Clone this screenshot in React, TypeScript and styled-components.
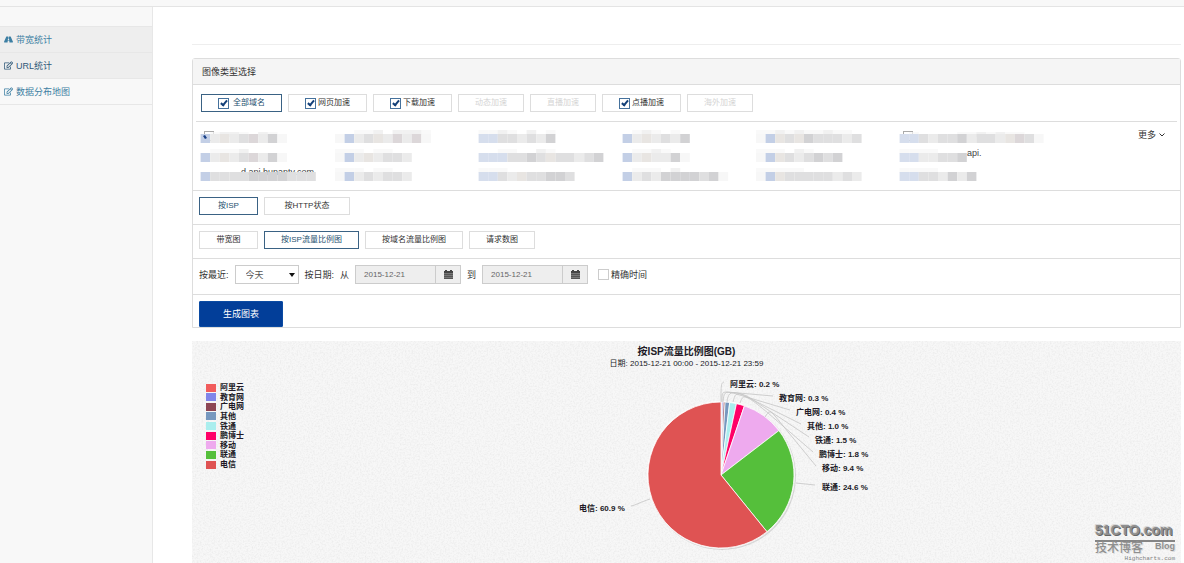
import React from "react";
import styled, { createGlobalStyle, css } from "styled-components";
import { FaRoad, FaRegEdit } from "react-icons/fa";

const GlobalStyle = createGlobalStyle`
  *, *::before, *::after { box-sizing: border-box; }
  body {
    margin: 0;
    background: #fff;
    color: #333;
    font-family: "Liberation Sans", "Noto Sans CJK SC", sans-serif;
    font-size: 9px;
    line-height: 12px;
  }
  button, input, select { font: inherit; color: inherit; margin: 0; }
`;

const Shell = styled.div`
  display: flex;
  flex-direction: column;
  min-height: 100vh;
`;

const TopBar = styled.header`
  height: 7px;
  background: #f8f8f8;
  border-bottom: 1px solid #e4e4e4;
`;

const Columns = styled.div`
  display: flex;
  flex: 1;
`;

const Sidebar = styled.nav`
  flex: 0 0 153px;
  padding-top: 19px;
  background: #f8f8f8;
  border-right: 1px solid #e7e7e7;
`;

const NavList = styled.ul`
  margin: 0;
  padding: 0;
  list-style: none;
  border-top: 1px solid #e7e7e7;
`;

const NavLink = styled.a<{ $active?: boolean; $dark?: boolean }>`
  display: flex;
  align-items: center;
  gap: 3px;
  height: 26px;
  padding-left: 4px;
  border-bottom: 1px solid #e7e7e7;
  background: ${(p) => (p.$active ? "#eeeeee" : "transparent")};
  color: ${(p) => (p.$dark ? "#2f5878" : "#3d7fa3")};
  text-decoration: none;
`;

const Main = styled.main`
  display: flex;
  flex-direction: column;
  flex: 1;
  min-width: 0;
  padding: 37px 3px 0 39px;
`;

const PageRule = styled.hr`
  width: 100%;
  margin: 0 0 13px;
  border: 0;
  border-top: 1px solid #eee;
`;

const Panel = styled.section`
  border: 1px solid #ddd;
  border-radius: 3px 3px 0 0;
`;

const PanelTitle = styled.h1`
  margin: 0;
  padding: 7px 9px 6px;
  border-bottom: 1px solid #ddd;
  background: #f5f5f5;
  font-size: 9px;
  font-weight: 400;
  line-height: 12px;
`;

const Section = styled.div`
  display: flex;
  align-items: center;
  gap: 6px;
  padding: 6px;
  border-top: 1px solid #ddd;
`;

const TabSection = styled(Section)`
  padding-bottom: 9px;
`;

const DateSection = styled(Section)`
  padding-bottom: 10px;
`;

const SubmitSection = styled(Section)`
  padding-bottom: 0;
`;

const DomainSection = styled.div`
  padding: 9px 3px 4px;
`;

const TypeRow = styled.div`
  display: flex;
  flex-wrap: wrap;
  gap: 6px;
  padding: 0 5px 9px;
  border-bottom: 1px solid #ddd;
`;

const chip = css<{ $selected?: boolean }>`
  display: inline-flex;
  align-items: center;
  justify-content: center;
  height: 18px;
  padding: 0 16px;
  border: 1px solid ${(p) => (p.$selected ? "#3a6284" : "#ddd")};
  background: #fff;
  color: ${(p) => (p.$selected ? "#25506f" : "#333")};
  line-height: 12px;
  white-space: nowrap;
`;

const Chip = styled.button<{ $selected?: boolean; $wide?: boolean }>`
  ${chip}
  min-width: ${(p) => (p.$wide ? 86 : 59)}px;
  && { font-size: 8px; }

  &:disabled { color: #d4d4d4; }
`;

const CheckChip = styled.label<{ $selected?: boolean }>`
  ${chip}
  gap: ${(p) => (p.$selected ? 4 : 2)}px;
  font-size: 8px;
`;

const CheckBox = styled.input`
  appearance: none;
  flex: none;
  position: relative;
  width: 11px;
  height: 11px;
  border: 1px solid #ccc;
  background: #fff;

  &:checked { border-color: #45719c; }

  &:checked::after {
    content: "";
    position: absolute;
    left: 3px;
    top: 0;
    width: 4px;
    height: 7px;
    border: solid #123f78;
    border-width: 0 2px 2px 0;
    transform: rotate(40deg);
  }
`;

const DomainArea = styled.div`
  display: flex;
  align-items: flex-start;
  padding: 7px 12px 0 5px;
`;

const DomainGrid = styled.div`
  flex: 1;
  min-width: 0;
  display: grid;
  grid-template-columns:
    minmax(0, 144fr) minmax(0, 134fr) minmax(0, 144fr)
    minmax(0, 144fr) minmax(0, 134fr) minmax(0, 238fr);
`;

const Mosaic = styled.svg`
  display: block;
  width: 170px;
  height: 19px;
  margin-left: -10px;
  overflow: visible;
`;

const MoreButton = styled.button`
  display: flex;
  flex: none;
  align-items: center;
  gap: 3px;
  padding: 0;
  border: 0;
  background: none;
  white-space: nowrap;
`;

const Period = styled.select`
  appearance: none;
  width: 64px;
  height: 19px;
  padding: 0 10px;
  border: 1px solid #ccc;
  border-radius: 0;
  background: #fff;
  && { color: #555; }
`;

const PeriodBox = styled.span`
  position: relative;
  display: flex;

  &::after {
    content: "";
    position: absolute;
    right: 4px;
    top: 8px;
    border: 3px solid transparent;
    border-top: 4px solid #111;
    border-bottom: 0;
    pointer-events: none;
  }
`;

const DateGroup = styled.span`
  display: flex;
  height: 19px;
  border: 1px solid #ccc;
  background: #eee;
`;

const DateInput = styled.input`
  width: 80px;
  padding: 0 8px;
  border: 0;
  border-right: 1px solid #ccc;
  background: #eee;
  && { color: #666; font-size: 8px; }
`;

const DateButton = styled.button`
  display: flex;
  align-items: center;
  justify-content: center;
  width: 24px;
  padding: 0;
  border: 0;
  background: #eee;
`;

const ExactTime = styled.label`
  display: flex;
  align-items: center;
  gap: 2px;
  padding-left: 4px;
`;

const Submit = styled.button`
  width: 84px;
  height: 26px;
  padding: 0;
  border: 1px solid #0b4ba3;
  border-radius: 1px;
  background: #023e99;
  && { color: #fff; }
`;

const ChartPanel = styled.section`
  position: relative;
  flex: 1;
  display: flex;
  flex-direction: column;
  margin-top: 13px;
  padding-top: 5px;
  background: #f7f7f7;
  color: #211a26;
`;

const Texture = styled.svg`
  position: absolute;
  inset: 0;
  width: 100%;
  height: 100%;
`;

const ChartTitle = styled.h2`
  position: relative;
  margin: 0;
  font-size: 10px;
  line-height: 12px;
  text-align: center;
`;

const ChartSubtitle = styled.p`
  position: relative;
  margin: 0;
  font-size: 8px;
  line-height: 12px;
  text-align: center;
`;

const ChartBody = styled.div`
  position: relative;
  display: flex;
  align-items: flex-start;
  padding-top: 5px;
`;

const Legend = styled.ul`
  display: flex;
  flex-direction: column;
  justify-content: space-between;
  flex: 0 0 68px;
  height: 86px;
  margin: 8px 0 0;
  padding: 0 0 0 14px;
  list-style: none;
  font-size: 8px;
  font-weight: 700;
`;

const LegendItem = styled.li<{ $color: string }>`
  display: flex;
  align-items: center;
  gap: 4px;
  height: 9px;
  line-height: 9px;

  &::before {
    content: "";
    width: 10px;
    height: 8px;
    background: ${(p) => p.$color};
  }
`;

const PieArea = styled.div`
  flex: 1;
  display: flex;
  justify-content: center;
`;

const Pie = styled.svg`
  width: 320px;
  height: 188px;
  overflow: visible;

  text {
    fill: #211a26;
    font-size: 8px;
    font-weight: 700;
  }
`;

const Watermark = styled.div`
  position: absolute;
  right: 6px;
  bottom: 0;
  width: 80px;
  color: #8f8f8f;
`;

const BrandName = styled.div`
  border-bottom: 2px solid #858585;
  font-size: 14px;
  font-weight: 700;
  line-height: 20px;
  white-space: nowrap;
  text-shadow: 1px 1px 0 #666, -1px -1px 0 #d8d8d8;
`;

const BrandSub = styled.div`
  display: flex;
  justify-content: space-between;
  font-size: 12px;
  font-weight: 500;
  line-height: 13px;
  text-shadow: 1px 1px 0 #ddd;

  b { font-size: 9px; line-height: 9px; }
`;

const Credit = styled.a`
  display: block;
  color: #808080;
  font-family: "Liberation Mono", monospace;
  font-size: 6px;
  line-height: 8px;
  text-align: right;
  text-decoration: none;
`;

interface Slice {
  name: string;
  value: number;
  color: string;
  label: [number, number];
  line: string;
}

const slices: Slice[] = [
  { name: "阿里云", value: 0.2, color: "#f15c5c", label: [169, 12], line: "M163 7C160 8 160 10 160 27" },
  { name: "教育网", value: 0.3, color: "#8085e9", label: [218, 26], line: "M212 21L166 17C161 17 161 18 161 27" },
  { name: "广电网", value: 0.4, color: "#8d4654", label: [235, 40], line: "M229 35L172 18C163 16 163 18 162 27" },
  { name: "其他", value: 1.0, color: "#7798bf", label: [246, 54], line: "M240 49L180 19C168 15 167 20 166 27" },
  { name: "铁通", value: 1.5, color: "#aaeeee", label: [254, 68], line: "M248 62L186 21C174 16 174 20 172 27" },
  { name: "鹏博士", value: 1.8, color: "#ff0066", label: [258, 82], line: "M252 77L207 38C182 17 182 20 179 28" },
  { name: "移动", value: 9.4, color: "#eeaaee", label: [261, 96], line: "M255 91L214 41C209 35 208 36 204 42" },
  { name: "联通", value: 24.6, color: "#55bf3b", label: [261, 115], line: "M254 110L235 108" },
  { name: "电信", value: 60.9, color: "#df5353", label: [18, 136], line: "M70 131C75 130 80 127 89 124" },
];

const CX = 160;
const CY = 100;
const R = 73;
const total = slices.reduce((sum, s) => sum + s.value, 0);

const point = (share: number) => {
  const angle = (share / total) * Math.PI * 2;
  return `${(CX + R * Math.sin(angle)).toFixed(2)} ${(CY - R * Math.cos(angle)).toFixed(2)}`;
};

const wedge = (index: number) => {
  const start = slices.slice(0, index).reduce((sum, s) => sum + s.value, 0);
  const end = start + slices[index].value;
  const large = slices[index].value > total / 2 ? 1 : 0;
  return `M${CX} ${CY}L${point(start)}A${R} ${R} 0 ${large} 1 ${point(end)}Z`;
};

/* Masked host names: each letter is the tone of one block. */
const tones: Record<string, string> = {
  b: "#c3cfe6",
  c: "#d6deed",
  l: "#f7f7f7",
  m: "#ebebeb",
  g: "#dfdfe0",
  d: "#d2d2d4",
  w: "#e8e5e2",
  p: "#dcd7d9",
};

interface Masked {
  row: string;
  shade?: string;
  text?: string;
  textX?: number;
  box?: boolean;
  dot?: boolean;
}

const domains: Masked[] = [
  { row: " bmwmgpmdl", shade: "  lmml ml ", box: true, dot: true },
  { row: "lbmgwmpmpl", shade: "  llm mmml" },
  { row: " ccggmgmd", shade: " llml m l" },
  { row: " bmwmgmd", shade: "  lml l" },
  { row: "lbwgwdgggmg", shade: "llmlmllmll" },
  { row: " ccgmggdmggmwpgl", shade: "  l    llmlmll", box: true },
  { row: " bmwmgpmdl", shade: "  lllm" },
  { row: "lbmwmggm", shade: "lll ll" },
  { row: " cccggdgwggmgd", shade: "   ll  ml" },
  { row: " bmwmmdl", shade: "  llml" },
  { row: "lbwgmgdgd", shade: "lll ml" },
  { row: " ccmmggd", shade: " llll", text: "api.", textX: 77 },
  { row: " bggggddddggg", text: "d.api.hunantv.com", textX: 50 },
  { row: "lbmgmggm", shade: "lll ll" },
  { row: " ccgmwggddg", shade: " lll" },
  { row: " bmgmddddgdl", shade: "  lll m" },
  { row: "lbwgggggmgm", shade: "lllll" },
  { row: " ccggmdmd", shade: " llll" },
];

const STEP = 9.6;

function MaskedDomain({ item }: { item: Masked }) {
  return (
    <Mosaic viewBox="0 0 170 19" aria-hidden="true">
      {item.box && <rect x="13.5" y="2.5" width="9" height="9" fill="#fff" stroke="#aaa" />}
      {(item.shade ?? "").split("").map((t, i) =>
        t === " " ? null : (
          <rect key={i} x={i * STEP} y={item.box ? 3 : 1} width={STEP} height="5" fill={tones[t]} opacity="0.7" />
        )
      )}
      {item.text && (
        <text x={item.textX} y="8" fontSize="9" fill="#444">
          {item.text}
        </text>
      )}
      {item.row.split("").map((t, i) =>
        t === " " ? null : <rect key={i} x={i * STEP} y="5" width={STEP} height="9" fill={tones[t]} />
      )}
      {item.dot && <path d="M12 7l2-1 2 3-2 1z" fill="#173f86" />}
    </Mosaic>
  );
}

const types = [
  { label: "全部域名", enabled: true, selected: true },
  { label: "网页加速", enabled: true },
  { label: "下载加速", enabled: true },
  { label: "动态加速", enabled: false },
  { label: "直播加速", enabled: false },
  { label: "点播加速", enabled: true },
  { label: "海外加速", enabled: false },
];

function DateField({ label }: { label: string }) {
  return (
    <DateGroup>
      <DateInput type="text" aria-label={label} defaultValue="2015-12-21" readOnly />
      <DateButton type="button" aria-label={label}>
        <svg width="9" height="9" viewBox="0 0 9 9" aria-hidden="true">
          <path d="M0 1h1V0h2v1h3V0h2v1h1v2H0z" fill="#444" />
          <path d="M0 3h9v6H0z" fill="#777" />
          <path d="M0 4.5h9M0 6.5h9M0 8.5h9" stroke="#555" />
        </svg>
      </DateButton>
    </DateGroup>
  );
}

export default function App() {
  return (
    <Shell>
      <GlobalStyle />
      <TopBar />
      <Columns>
        <Sidebar>
          <NavList>
            <li>
              <NavLink href="#bandwidth" $active>
                <FaRoad size={9} />
                带宽统计
              </NavLink>
            </li>
            <li>
              <NavLink href="#url" $active $dark>
                <FaRegEdit size={9} />
                URL统计
              </NavLink>
            </li>
            <li>
              <NavLink href="#map">
                <FaRegEdit size={9} />
                数据分布地图
              </NavLink>
            </li>
          </NavList>
        </Sidebar>
        <Main>
          <PageRule />
          <Panel>
            <PanelTitle>图像类型选择</PanelTitle>
            <DomainSection>
              <TypeRow>
                {types.map((t) =>
                  t.enabled ? (
                    <CheckChip key={t.label} $selected={t.selected}>
                      <CheckBox type="checkbox" defaultChecked />
                      {t.label}
                    </CheckChip>
                  ) : (
                    <Chip key={t.label} type="button" disabled>
                      {t.label}
                    </Chip>
                  )
                )}
              </TypeRow>
              <DomainArea>
                <DomainGrid>
                  {domains.map((d, i) => (
                    <MaskedDomain key={i} item={d} />
                  ))}
                </DomainGrid>
                <MoreButton type="button">
                  更多
                  <svg width="6" height="4" viewBox="0 0 6 4" aria-hidden="true">
                    <path d="M.5 .5L3 3L5.5 .5" fill="none" stroke="#333" />
                  </svg>
                </MoreButton>
              </DomainArea>
            </DomainSection>
            <TabSection>
              <Chip type="button" $selected>按ISP</Chip>
              <Chip type="button" $wide>按HTTP状态</Chip>
            </TabSection>
            <TabSection>
              <Chip type="button">带宽图</Chip>
              <Chip type="button" $selected>按ISP流量比例图</Chip>
              <Chip type="button">按域名流量比例图</Chip>
              <Chip type="button">请求数图</Chip>
            </TabSection>
            <DateSection>
              <label htmlFor="period">按最近:</label>
              <PeriodBox>
                <Period id="period" defaultValue="今天">
                  <option>今天</option>
                </Period>
              </PeriodBox>
              <span>按日期:</span>
              <span>从</span>
              <DateField label="开始日期" />
              <span>到</span>
              <DateField label="结束日期" />
              <ExactTime>
                <CheckBox type="checkbox" />
                精确时间
              </ExactTime>
            </DateSection>
            <SubmitSection>
              <Submit type="button">生成图表</Submit>
            </SubmitSection>
          </Panel>
          <ChartPanel>
            <Texture aria-hidden="true">
              <filter id="sand">
                <feTurbulence type="fractalNoise" baseFrequency="0.6" numOctaves="3" seed="4" />
                <feColorMatrix values="0 0 0 0 0.5  0 0 0 0 0.5  0 0 0 0 0.5  1 0 0 0 -0.4" />
              </filter>
              <rect width="100%" height="100%" filter="url(#sand)" opacity="0.4" />
            </Texture>
            <ChartTitle>按ISP流量比例图(GB)</ChartTitle>
            <ChartSubtitle>日期: 2015-12-21 00:00 - 2015-12-21 23:59</ChartSubtitle>
            <ChartBody>
              <Legend>
                {slices.map((s) => (
                  <LegendItem key={s.name} $color={s.color}>
                    {s.name}
                  </LegendItem>
                ))}
              </Legend>
              <PieArea>
                <Pie viewBox="0 0 320 188" role="img" aria-label="按ISP流量比例图">
                  <circle cx={CX + 1} cy={CY + 1} r={R + 1} fill="#000" opacity="0.12" />
                  <circle cx={CX} cy={CY} r={R + 1} fill="#fff" opacity="0.7" />
                  {slices.map((s, i) => (
                    <path key={s.name} d={wedge(i)} fill={s.color} stroke="#fff" strokeWidth="0.8" strokeLinejoin="round" />
                  ))}
                  {slices.map((s) => (
                    <path key={s.name} d={s.line} fill="none" stroke="#c4c4c4" strokeWidth="0.8" />
                  ))}
                  {slices.map((s) => (
                    <text key={s.name} x={s.label[0]} y={s.label[1]}>
                      {`${s.name}: ${s.value.toFixed(1)} %`}
                    </text>
                  ))}
                </Pie>
              </PieArea>
            </ChartBody>
            <Watermark>
              <BrandName>51CTO.com</BrandName>
              <BrandSub>
                技术博客<b>Blog</b>
              </BrandSub>
              <Credit href="#highcharts">Highcharts.com</Credit>
            </Watermark>
          </ChartPanel>
        </Main>
      </Columns>
    </Shell>
  );
}
